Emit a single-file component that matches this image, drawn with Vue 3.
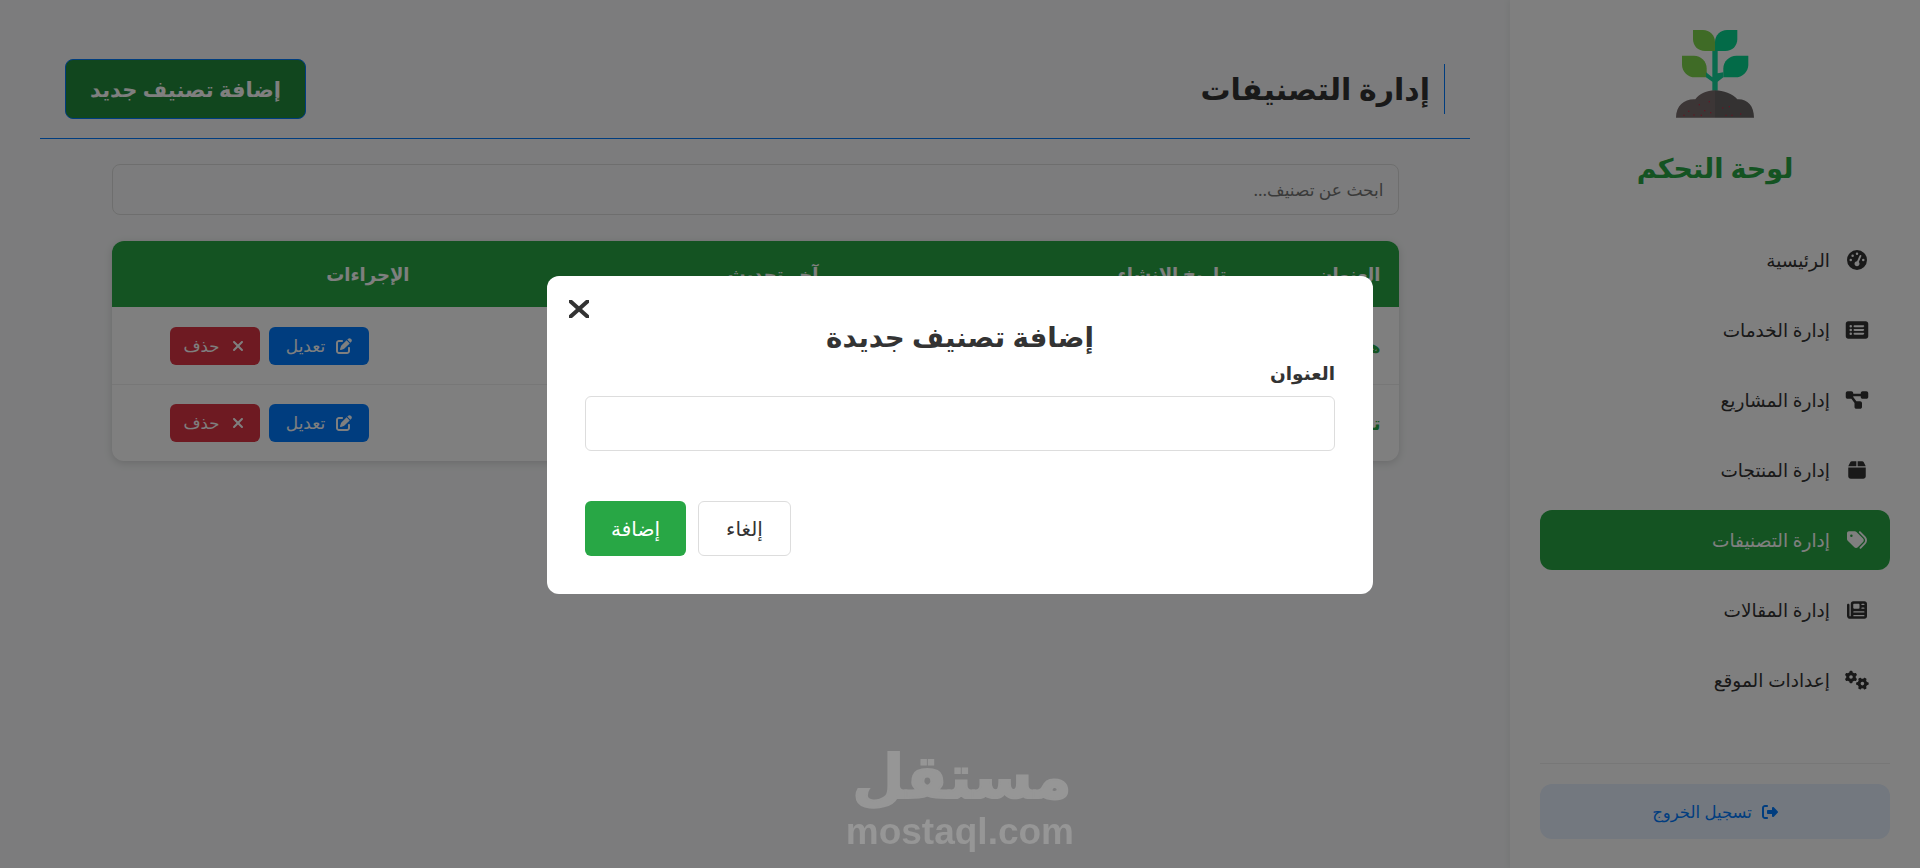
<template>
  <div class="page" dir="rtl">
    <aside class="sidebar">
      <svg class="logo" viewBox="0 0 330 330" width="110" height="110">
        <path d="M165 93H135C114 93 99 78 99 57V30H129C149 30 165 46 165 66Z" fill="#7ed64c" />
        <path d="M165 93V66C165 46 181 30 201 30H232V57C232 78 217 93 196 93Z" fill="#06d690" />
        <path d="M66 107H102C123 107 140 124 140 145V172H105C84 172 66 155 66 134Z" fill="#7ed64c" />
        <path d="M265 107H229C208 107 190 124 190 145V172H226C247 172 265 155 265 134Z" fill="#06d690" />
        <path d="M157 93H173V160L190 157V172L173 185V212H157V185L138 172V157L157 172Z" fill="#12d49a" />
        <path d="M165 211C140 211 118 222 106 238C75 236 48 255 48 293H165Z" fill="#786c6c" />
        <path d="M165 211C190 211 218 222 232 238C260 236 282 255 282 293H165Z" fill="#686464" />
        <rect v-for="d in soilDots" :key="d[0] + '-' + d[1]" :x="d[0]" :y="d[1]" width="4" height="4" fill="#c03048" />
      </svg>
      <h1 class="brand">لوحة التحكم</h1>
      <nav class="nav">
        <a v-for="item in navItems" :key="item.label" class="nav-item" :class="{ active: item.active }">
          <span class="nav-icon">
            <svg :viewBox="item.box" class="ico"><path :d="item.d" /></svg>
          </span>
          <span class="nav-label">{{ item.label }}</span>
        </a>
      </nav>
      <div class="sidebar-foot">
        <button class="logout">
          <svg viewBox="0 0 512 512" class="ico logout-ico"><path :d="icons.logout" /></svg>
          <span>تسجيل الخروج</span>
        </button>
      </div>
    </aside>

    <main class="main">
      <header class="head">
        <h2 class="page-title">إدارة التصنيفات</h2>
        <button class="add-btn">إضافة تصنيف جديد</button>
      </header>

      <div class="content">
        <input class="search" placeholder="ابحث عن تصنيف..." />
        <table class="table">
          <colgroup>
            <col style="width: 154px" />
            <col style="width: 408px" />
            <col style="width: 409px" />
            <col />
          </colgroup>
          <thead>
            <tr>
              <th>العنوان</th>
              <th>تاريخ الإنشاء</th>
              <th>آخر تحديث</th>
              <th>الإجراءات</th>
            </tr>
          </thead>
          <tbody>
            <tr v-for="row in rows" :key="row.title">
              <td class="row-title">{{ row.title }}</td>
              <td>{{ row.created }}</td>
              <td>{{ row.updated }}</td>
              <td>
                <div class="actions">
                  <button class="btn-edit">
                    <svg viewBox="0 0 512 512" class="ico"><path :d="icons.edit" /></svg>
                    <span>تعديل</span>
                  </button>
                  <button class="btn-del">
                    <svg viewBox="0 0 384 512" class="ico"><path :d="icons.xmark" /></svg>
                    <span>حذف</span>
                  </button>
                </div>
              </td>
            </tr>
          </tbody>
        </table>
      </div>
    </main>

    <div class="overlay">
      <div class="modal">
        <button class="close">
          <svg viewBox="42 105 300 302" preserveAspectRatio="none" class="ico"><path :d="icons.xmark" /></svg>
        </button>
        <h3 class="modal-title">إضافة تصنيف جديدة</h3>
        <label class="field-label">العنوان</label>
        <input class="field" />
        <div class="modal-actions">
          <button class="btn-cancel">إلغاء</button>
          <button class="btn-add">إضافة</button>
        </div>
      </div>
    </div>

    <div class="watermark">
      <div class="wm-ar">مستقل</div>
      <div class="wm-en">mostaql.com</div>
    </div>
  </div>
</template>

<script setup>
const icons = {
  gauge: "M0 256a256 256 0 1 1 512 0A256 256 0 1 1 0 256zM288 96a32 32 0 1 0 -64 0 32 32 0 1 0 64 0zM256 416c35.3 0 64-28.7 64-64c0-17.4-6.9-33.1-18.1-44.6L366 161.7c5.3-12.1-.2-26.3-12.3-31.6s-26.3 .2-31.6 12.3L257.9 288c-.6 0-1.3 0-1.9 0c-35.3 0-64 28.7-64 64s28.7 64 64 64zM176 144a32 32 0 1 0 -64 0 32 32 0 1 0 64 0zM96 288a32 32 0 1 0 0-64 32 32 0 1 0 0 64zm352-32a32 32 0 1 0 -64 0 32 32 0 1 0 64 0z",
  list: "M0 96C0 60.7 28.7 32 64 32H512c35.3 0 64 28.7 64 64V416c0 35.3-28.7 64-64 64H64c-35.3 0-64-28.7-64-64V96zM128 288a32 32 0 1 0 0-64 32 32 0 1 0 0 64zm32-128a32 32 0 1 0 -64 0 32 32 0 1 0 64 0zM128 384a32 32 0 1 0 0-64 32 32 0 1 0 0 64zm96-248c-13.3 0-24 10.7-24 24s10.7 24 24 24H448c13.3 0 24-10.7 24-24s-10.7-24-24-24H224zm0 96c-13.3 0-24 10.7-24 24s10.7 24 24 24H448c13.3 0 24-10.7 24-24s-10.7-24-24-24H224zm0 96c-13.3 0-24 10.7-24 24s10.7 24 24 24H448c13.3 0 24-10.7 24-24s-10.7-24-24-24H224z",
  diagram: "M0 80C0 53.5 21.5 32 48 32h96c26.5 0 48 21.5 48 48V96H384V80c0-26.5 21.5-48 48-48h96c26.5 0 48 21.5 48 48v96c0 26.5-21.5 48-48 48H432c-26.5 0-48-21.5-48-48V160H192v16c0 1.7-.1 3.4-.3 5L272 288h96c26.5 0 48 21.5 48 48v96c0 26.5-21.5 48-48 48H272c-26.5 0-48-21.5-48-48V336c0-1.7 .1-3.4 .3-5L144 224H48c-26.5 0-48-21.5-48-48V80z",
  box: "M50.7 58.5L0 160H208V32H93.7C75.5 32 58.9 42.3 50.7 58.5zM240 160H448L397.3 58.5C389.1 42.3 372.5 32 354.3 32H240V160zm208 32H0V416c0 35.3 28.7 64 64 64H384c35.3 0 64-28.7 64-64V192z",
  tags: "M345 39.1L472.8 168.4c52.4 53 52.4 138.2 0 191.2L360.8 472.9c-9.3 9.4-24.5 9.5-33.9 .2s-9.5-24.5-.2-33.9L438.6 325.9c33.9-34.3 33.9-89.4 0-123.7L310.9 72.9c-9.3-9.4-9.2-24.6 .2-33.9s24.6-9.2 33.9 .2zM0 229.5V80C0 53.5 21.5 32 48 32H197.5c17 0 33.3 6.7 45.3 18.7l168 168c25 25 25 65.5 0 90.5L277.3 442.7c-25 25-65.5 25-90.5 0l-168-168C6.7 262.7 0 246.5 0 229.5zM144 144a32 32 0 1 0 -64 0 32 32 0 1 0 64 0z",
  news: "M96 96c0-35.3 28.7-64 64-64H448c35.3 0 64 28.7 64 64V416c0 35.3-28.7 64-64 64H80c-44.2 0-80-35.8-80-80V128c0-17.7 14.3-32 32-32s32 14.3 32 32V400c0 8.8 7.2 16 16 16s16-7.2 16-16V96zm64 24v80c0 13.3 10.7 24 24 24H296c13.3 0 24-10.7 24-24V120c0-13.3-10.7-24-24-24H184c-13.3 0-24 10.7-24 24zm208-8c0 8.8 7.2 16 16 16h48c8.8 0 16-7.2 16-16s-7.2-16-16-16H384c-8.8 0-16 7.2-16 16zm0 96c0 8.8 7.2 16 16 16h48c8.8 0 16-7.2 16-16s-7.2-16-16-16H384c-8.8 0-16 7.2-16 16zM160 304c0 8.8 7.2 16 16 16H432c8.8 0 16-7.2 16-16s-7.2-16-16-16H176c-8.8 0-16 7.2-16 16zm0 96c0 8.8 7.2 16 16 16H432c8.8 0 16-7.2 16-16s-7.2-16-16-16H176c-8.8 0-16 7.2-16 16z",
  gears: "M308.5 135.3c7.1-6.3 9.9-16.2 6.2-25c-2.3-5.3-4.8-10.5-7.6-15.5L304 89.4c-3-5-6.3-9.9-9.8-14.6c-5.7-7.6-15.7-10.1-24.7-7.1l-28.2 9.3c-10.7-8.8-23-16-36.2-20.9L199 27.1c-1.9-9.3-9.1-16.7-18.5-17.8C173.9 8.4 167.2 8 160.4 8h-.7c-6.8 0-13.5 .4-20.1 1.2c-9.4 1.1-16.6 8.6-18.5 17.8L115 56.1c-13.3 5-25.5 12.1-36.2 20.9L50.5 67.8c-9-3-19-.5-24.7 7.1c-3.5 4.7-6.8 9.6-9.9 14.6l-3 5.3c-2.8 5-5.3 10.2-7.6 15.6c-3.7 8.7-.9 18.6 6.2 25l22.2 19.8C32.6 161.9 32 168.9 32 176s.6 14.1 1.7 20.9L11.5 216.7c-7.1 6.3-9.9 16.2-6.2 25c2.3 5.3 4.8 10.5 7.6 15.6l3 5.2c3 5.1 6.3 9.9 9.9 14.6c5.7 7.6 15.7 10.1 24.7 7.1l28.2-9.3c10.7 8.8 23 16 36.2 20.9l6.1 29.1c1.9 9.3 9.1 16.7 18.5 17.8c6.7 .8 13.5 1.2 20.4 1.2s13.7-.4 20.4-1.2c9.4-1.1 16.6-8.6 18.5-17.8l6.1-29.1c13.3-5 25.5-12.1 36.2-20.9l28.2 9.3c9 3 19 .5 24.7-7.1c3.5-4.7 6.8-9.5 9.8-14.6l3.1-5.4c2.8-5 5.3-10.2 7.6-15.5c3.7-8.7 .9-18.6-6.2-25l-22.2-19.8c1.1-6.8 1.7-13.8 1.7-20.9s-.6-14.1-1.7-20.9l22.2-19.8zM112 176a48 48 0 1 1 96 0 48 48 0 1 1 -96 0zM504.7 500.5c6.3 7.1 16.2 9.9 25 6.2c5.3-2.3 10.5-4.8 15.5-7.6l5.4-3.1c5-3 9.9-6.3 14.6-9.8c7.6-5.7 10.1-15.7 7.1-24.7l-9.3-28.2c8.8-10.7 16-23 20.9-36.2l29.1-6.1c9.3-1.9 16.7-9.1 17.8-18.5c.8-6.7 1.2-13.5 1.2-20.4s-.4-13.7-1.2-20.4c-1.1-9.4-8.6-16.6-17.8-18.5L583.9 307c-5-13.3-12.1-25.5-20.9-36.2l9.3-28.2c3-9 .5-19-7.1-24.7c-4.7-3.5-9.6-6.8-14.6-9.9l-5.3-3c-5-2.8-10.2-5.3-15.6-7.6c-8.7-3.7-18.6-.9-25 6.2l-19.8 22.2c-6.8-1.1-13.8-1.7-20.9-1.7s-14.1 .6-20.9 1.7l-19.8-22.2c-6.3-7.1-16.2-9.9-25-6.2c-5.3 2.3-10.5 4.8-15.6 7.6l-5.2 3c-5.1 3-9.9 6.3-14.6 9.9c-7.6 5.7-10.1 15.7-7.1 24.7l9.3 28.2c-8.8 10.7-16 23-20.9 36.2L315.1 313c-9.3 1.9-16.7 9.1-17.8 18.5c-.8 6.7-1.2 13.5-1.2 20.4s.4 13.7 1.2 20.4c1.1 9.4 8.6 16.6 17.8 18.5l29.1 6.1c5 13.3 12.1 25.5 20.9 36.2l-9.3 28.2c-3 9-.5 19 7.1 24.7c4.7 3.5 9.5 6.8 14.6 9.8l5.4 3.1c5 2.8 10.2 5.3 15.5 7.6c8.7 3.7 18.6 .9 25-6.2l19.8-22.2c6.8 1.1 13.8 1.7 20.9 1.7s14.1-.6 20.9-1.7l19.8 22.2zM464 304a48 48 0 1 1 0 96 48 48 0 1 1 0-96z",
  logout: "M377.9 105.9L500.7 228.7c7.2 7.2 11.3 17.1 11.3 27.3s-4.1 20.1-11.3 27.3L377.9 406.1c-6.4 6.4-15 9.9-24 9.9c-18.7 0-33.9-15.2-33.9-33.9l0-62.1-128 0c-17.7 0-32-14.3-32-32l0-64c0-17.7 14.3-32 32-32l128 0 0-62.1c0-18.7 15.2-33.9 33.9-33.9c9 0 17.6 3.6 24 9.9zM160 96L96 96c-17.7 0-32 14.3-32 32l0 256c0 17.7 14.3 32 32 32l64 0c17.7 0 32 14.3 32 32s-14.3 32-32 32l-64 0c-53 0-96-43-96-96L0 128C0 75 43 32 96 32l64 0c17.7 0 32 14.3 32 32s-14.3 32-32 32z",
  edit: "M471.6 21.7c-21.9-21.9-57.3-21.9-79.2 0L362.3 51.7l97.9 97.9 30.1-30.1c21.9-21.9 21.9-57.3 0-79.2L471.6 21.7zm-299.2 220c-6.1 6.1-10.8 13.6-13.5 21.9l-29.6 88.8c-2.9 8.6-.6 18.1 5.8 24.6s15.9 8.7 24.6 5.8l88.8-29.6c8.2-2.7 15.7-7.4 21.9-13.5L437.7 172.3 339.7 74.3 172.4 241.7zM96 64C43 64 0 107 0 160V416c0 53 43 96 96 96H352c53 0 96-43 96-96V320c0-17.7-14.3-32-32-32s-32 14.3-32 32v96c0 17.7-14.3 32-32 32H96c-17.7 0-32-14.3-32-32V160c0-17.7 14.3-32 32-32h96c17.7 0 32-14.3 32-32s-14.3-32-32-32H96z",
  xmark: "M342.6 150.6c12.5-12.5 12.5-32.8 0-45.3s-32.8-12.5-45.3 0L192 210.7 86.6 105.4c-12.5-12.5-32.8-12.5-45.3 0s-12.5 32.8 0 45.3L146.7 256 41.4 361.4c-12.5 12.5-12.5 32.8 0 45.3s32.8 12.5 45.3 0L192 301.3 297.4 406.6c12.5 12.5 32.8 12.5 45.3 0s12.5-32.8 0-45.3L237.3 256 342.6 150.6z"
};

const navItems = [
  { label: "الرئيسية", d: icons.gauge, box: "0 0 512 512" },
  { label: "إدارة الخدمات", d: icons.list, box: "0 0 576 512" },
  { label: "إدارة المشاريع", d: icons.diagram, box: "0 0 576 512" },
  { label: "إدارة المنتجات", d: icons.box, box: "0 0 448 512" },
  { label: "إدارة التصنيفات", d: icons.tags, box: "0 0 512 512", active: true },
  { label: "إدارة المقالات", d: icons.news, box: "0 0 512 512" },
  { label: "إعدادات الموقع", d: icons.gears, box: "0 0 640 512" }
];

const rows = [
  { title: "هندسة", created: "2025-01-12", updated: "2025-01-12" },
  { title: "تصميم", created: "2025-01-12", updated: "2025-01-12" }
];

const soilDots = [
  [84, 272], [100, 283], [116, 252], [132, 270], [146, 243], [150, 276],
  [70, 284], [122, 284], [186, 262], [206, 258], [196, 284], [240, 280], [214, 284]
];
</script>

<style>
html,
body {
  margin: 0;
  background: #f8f9fa;
  font-family: "Noto Sans", "DejaVu Sans", sans-serif;
}
</style>

<style scoped>
.page {
  display: flex;
  height: 868px;
  overflow: hidden;
  color: #333;
}

.ico {
  display: block;
  fill: currentColor;
}

.sidebar {
  width: 410px;
  flex: none;
  box-sizing: border-box;
  padding: 20px 30px 29px;
  background: #fff;
  box-shadow: -2px 0 6px rgba(0, 0, 0, 0.05);
  display: flex;
  flex-direction: column;
  align-items: center;
}

.logo {
  display: block;
}

.brand {
  margin: 18px 0 0;
  font-size: 27px;
  line-height: 40px;
  font-weight: 700;
  color: #28a745;
}

.nav {
  width: 100%;
  margin-top: 42px;
  display: flex;
  flex-direction: column;
  gap: 10px;
}

.nav-item {
  height: 60px;
  box-sizing: border-box;
  padding: 0 21px;
  display: flex;
  align-items: center;
  gap: 15px;
  border-radius: 12px;
  font-size: 18.5px;
  color: #333;
}

.nav-label {
  margin-bottom: 2px;
}

.nav-item.active {
  background: #28a745;
  color: #fff;
}

.nav-icon {
  width: 24px;
  display: flex;
  justify-content: center;
}

.nav-icon .ico {
  height: 20px;
  width: 24px;
}

.sidebar-foot {
  width: 100%;
  margin-top: auto;
  padding-top: 20px;
  border-top: 1px solid #eee;
}

.logout {
  width: 100%;
  height: 55px;
  border: none;
  border-radius: 12px;
  background: #e6f0ff;
  color: #007bff;
  font: inherit;
  font-size: 16.5px;
  display: flex;
  align-items: center;
  justify-content: center;
  gap: 10px;
}

.logout-ico {
  width: 16px;
  height: 16px;
}

.main {
  flex: 1;
  min-width: 0;
  padding: 0 40px;
}

.head {
  margin-top: 59px;
  padding: 0 25px 19px 25px;
  height: 60px;
  display: flex;
  align-items: center;
  justify-content: space-between;
  border-bottom: 1px solid #007bff;
}

.page-title {
  margin: 0;
  height: 50px;
  line-height: 50px;
  padding-right: 14px;
  border-right: 1px solid #007bff;
  font-size: 30px;
  font-weight: 700;
  color: #333;
}

.add-btn {
  width: 241px;
  height: 60px;
  border: 1px solid #007bff;
  border-radius: 8px;
  background: #238c3c;
  color: #fff;
  font: inherit;
  font-size: 21px;
  font-weight: 700;
}

.content {
  width: 1287px;
  margin: 25px auto 0;
}

.search {
  display: block;
  width: 100%;
  height: 51px;
  box-sizing: border-box;
  padding: 0 14px;
  border: 1px solid #ddd;
  border-radius: 8px;
  background: #f8f9fa;
  font: inherit;
  font-size: 17px;
}

.table {
  width: 100%;
  margin-top: 26px;
  border-collapse: separate;
  border-spacing: 0;
  table-layout: fixed;
  background: #fff;
  border-radius: 12px;
  overflow: hidden;
  box-shadow: 0 2px 8px rgba(0, 0, 0, 0.15);
}

.table th {
  height: 66px;
  padding: 0 18px;
  background: #28a745;
  color: #fff;
  font-size: 18px;
  font-weight: 700;
  text-align: right;
}

.table td {
  height: 77px;
  padding: 0 18px;
  box-sizing: border-box;
  font-size: 16px;
}

.table tbody tr + tr td {
  border-top: 1px solid #eee;
  padding-bottom: 1px;
}

.table td.row-title {
  color: #28a745;
  font-size: 18px;
  font-weight: 700;
}

.actions {
  display: flex;
  justify-content: center;
  gap: 9px;
}

.btn-edit,
.btn-del {
  height: 38px;
  border: none;
  border-radius: 6px;
  color: #fff;
  font: inherit;
  display: flex;
  align-items: center;
  justify-content: center;
  gap: 11px;
}

.btn-edit {
  width: 100px;
  background: #007bff;
  font-size: 17px;
}

.btn-del {
  width: 90px;
  background: #dc3545;
  font-size: 16.5px;
}

.btn-edit .ico,
.btn-del .ico {
  width: 16px;
  height: 16px;
}

.overlay {
  position: fixed;
  inset: 0;
  padding-top: 1px;
  background: rgba(0, 0, 0, 0.5);
  display: flex;
  align-items: center;
  justify-content: center;
}

.modal {
  position: relative;
  width: 826px;
  box-sizing: border-box;
  padding: 37px 38px 38px;
  background: #fff;
  border-radius: 12px;
}

.close {
  position: absolute;
  top: 24px;
  left: 22px;
  width: 20px;
  height: 18px;
  padding: 0;
  border: none;
  background: none;
  color: #333;
}

.close .ico {
  width: 20px;
  height: 18px;
}

.modal-title {
  margin: 0 0 2px;
  text-align: center;
  font-size: 27.7px;
  line-height: 46px;
  font-weight: 700;
  color: #333;
}

.field-label {
  display: block;
  font-size: 18.5px;
  line-height: 23px;
  font-weight: 700;
  margin-bottom: 12px;
}

.field {
  display: block;
  width: 100%;
  height: 55px;
  box-sizing: border-box;
  border: 1px solid #ddd;
  border-radius: 6px;
  background: #fff;
}

.modal-actions {
  margin-top: 50px;
  display: flex;
  justify-content: flex-end;
  gap: 12px;
}

.btn-cancel,
.btn-add {
  height: 55px;
  border-radius: 6px;
  font: inherit;
  font-size: 20px;
}

.btn-cancel {
  width: 93px;
  border: 1px solid #ddd;
  background: #fff;
  color: #333;
}

.btn-add {
  width: 101px;
  border: none;
  background: #28a745;
  color: #fff;
}

.watermark {
  position: fixed;
  left: 850px;
  top: 740px;
  width: 224px;
  text-align: center;
  color: #969696;
  font-weight: 700;
  white-space: nowrap;
}

.wm-ar {
  font-size: 60px;
  line-height: 70px;
  -webkit-text-stroke: 2px #969696;
}

.wm-en {
  font-family: "Liberation Sans", sans-serif;
  font-size: 37px;
  line-height: 44px;
}
</style>
